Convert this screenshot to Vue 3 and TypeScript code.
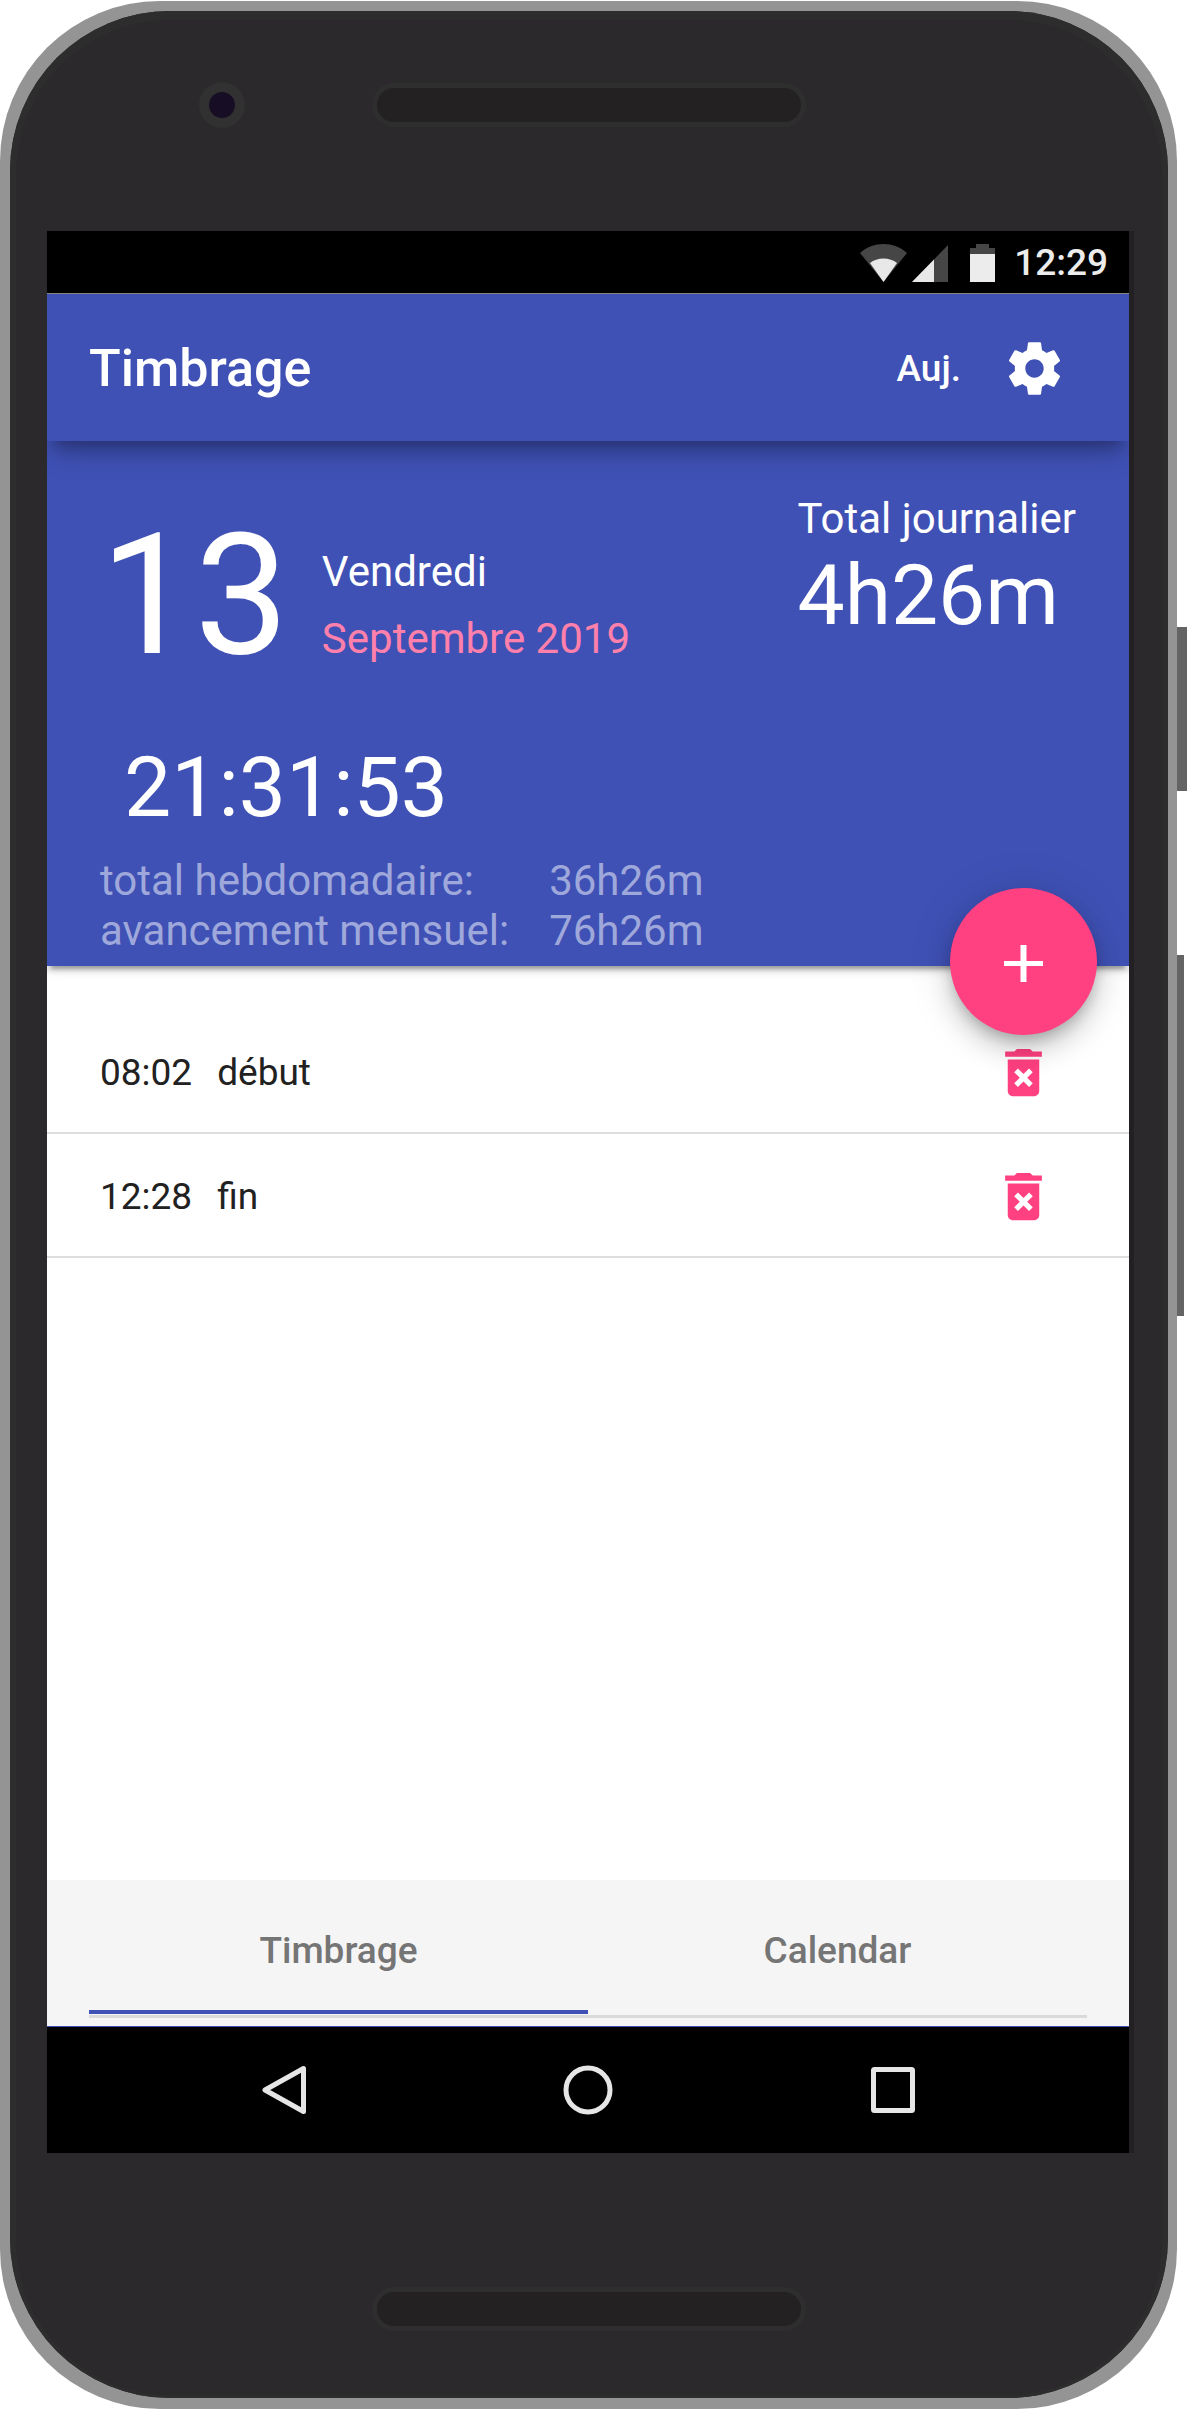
<script setup lang="ts">
import { ref } from 'vue'

interface Stamp {
  time: string
  kind: string
}

const stamps = ref<Stamp[]>([
  { time: '08:02', kind: 'début' },
  { time: '12:28', kind: 'fin' },
])

const totals = [
  { label: 'total hebdomadaire:', value: '36h26m' },
  { label: 'avancement mensuel:', value: '76h26m' },
]

const tabs = ['Timbrage', 'Calendar']
const activeTab = ref('Timbrage')

function removeStamp(index: number) {
  stamps.value.splice(index, 1)
}
</script>

<template>
  <div class="device">
    <div class="phone">
      <div class="body">
        <div class="bezel-top">
          <span class="camera"></span>
          <span class="speaker"></span>
        </div>

        <div class="screen">
          <div class="status-bar">
            <svg class="wifi" width="47" height="38" viewBox="0 0 47 38" aria-hidden="true">
              <path d="M0 9C13-3 34-3 47 9L23.500 38Z" fill="#464646" />
              <path d="M10 19C17 13 30 13 37 19L23.500 38Z" fill="#e8e8e8" />
            </svg>
            <svg class="signal" width="36" height="38" viewBox="0 0 36 38" aria-hidden="true">
              <path d="M0 38L36 1V38Z" fill="#464646" />
              <path d="M0 38L22 15.400V38Z" fill="#e8e8e8" />
            </svg>
            <svg class="battery" width="25" height="38" viewBox="0 0 25 38" aria-hidden="true">
              <path d="M6 0H19V4H25V38H0V4H6Z" fill="#464646" />
              <path d="M0 10H25V38H0Z" fill="#ececec" />
            </svg>
            <span class="status-time">12:29</span>
          </div>

          <div class="app">
            <header class="toolbar">
              <h1>Timbrage</h1>
              <button class="today" type="button">Auj.</button>
              <button class="icon-button" type="button" aria-label="Paramètres">
                <svg width="63" height="63" viewBox="0 0 24 24" aria-hidden="true">
                  <path
                    fill="currentColor"
                    d="M19.430 12.980c.04-.32.07-.64.07-.98s-.03-.66-.07-.98l2.110-1.650c.19-.15.24-.42.12-.64l-2-3.460c-.12-.22-.39-.3-.61-.22l-2.490 1c-.52-.4-1.080-.73-1.690-.98l-.38-2.650C14.460 2.180 14.250 2 14 2h-4c-.25 0-.46.18-.49.42l-.38 2.650c-.61.25-1.170.59-1.690.98l-2.490-1c-.23-.09-.49 0-.61.22l-2 3.460c-.13.22-.07.49.12.64l2.110 1.650c-.04.32-.07.65-.07.98s.03.66.07.98l-2.110 1.650c-.19.15-.24.42-.12.64l2 3.460c.12.22.39.3.61.22l2.490-1c.52.4 1.080.73 1.690.98l.38 2.650c.03.24.24.42.49.42h4c.25 0 .46-.18.49-.42l.38-2.650c.61-.25 1.170-.59 1.690-.98l2.490 1c.23.09.49 0 .61-.22l2-3.460c.12-.22.07-.49-.12-.64l-2.110-1.650zM12 15.500c-1.930 0-3.500-1.570-3.500-3.500s1.570-3.500 3.500-3.500 3.500 1.570 3.500 3.500-1.570 3.500-3.500 3.500z"
                  />
                </svg>
              </button>
            </header>

            <section class="hero">
              <div class="summary">
                <div class="date">
                  <span class="day">13</span>
                  <div class="date-lines">
                    <div>Vendredi</div>
                    <div class="month">Septembre 2019</div>
                  </div>
                </div>
                <div class="clock">21:31:53</div>
                <dl class="totals">
                  <template v-for="total in totals" :key="total.label">
                    <dt>{{ total.label }}</dt>
                    <dd>{{ total.value }}</dd>
                  </template>
                </dl>
              </div>
              <div class="daily">
                <div class="daily-label">Total journalier</div>
                <div class="daily-value">4h26m</div>
              </div>
              <button class="fab" type="button" aria-label="Ajouter">
                <svg width="63" height="63" viewBox="0 0 63 63" aria-hidden="true">
                  <path d="M28.500 15h6v16h16.500v5h-16.500V52h-6V36h-16.500v-5h16.500z" fill="#fff" />
                </svg>
              </button>
            </section>

            <ul class="stamps">
              <li v-for="(stamp, index) in stamps" :key="stamp.time">
                <span>{{ stamp.time }}</span>
                <span class="kind">{{ stamp.kind }}</span>
                <button
                  class="icon-button delete"
                  type="button"
                  :aria-label="'Supprimer ' + stamp.time"
                  @click="removeStamp(index)"
                >
                  <svg width="63" height="63" viewBox="0 0 24 24" aria-hidden="true">
                    <path
                      fill="currentColor"
                      d="M6 19c0 1.100.9 2 2 2h8c1.100 0 2-.9 2-2V7H6v12zm2.460-7.120l1.410-1.410L12 12.590l2.120-2.120 1.410 1.410L13.410 14l2.120 2.120-1.410 1.410L12 15.410l-2.120 2.120-1.410-1.410L10.590 14l-2.130-2.120zM15.500 4l-1-1h-5l-1 1H5v2h14V4z"
                    />
                  </svg>
                </button>
              </li>
            </ul>

            <nav class="tabs">
              <div class="tab-row">
                <button
                  v-for="tab in tabs"
                  :key="tab"
                  type="button"
                  :class="{ active: tab === activeTab }"
                  @click="activeTab = tab"
                >
                  {{ tab }}
                </button>
              </div>
            </nav>
          </div>

          <div class="nav-bar">
            <button type="button" aria-label="Retour">
              <svg width="50" height="50" viewBox="0 0 50 50" aria-hidden="true">
                <path d="M44.500 3.500V46.500L6 25Z" />
              </svg>
            </button>
            <button type="button" aria-label="Accueil">
              <svg width="50" height="50" viewBox="0 0 50 50" aria-hidden="true">
                <circle cx="25" cy="25" r="22" />
              </svg>
            </button>
            <button type="button" aria-label="Applications récentes">
              <svg width="50" height="50" viewBox="0 0 50 50" aria-hidden="true">
                <rect x="6.500" y="4.500" width="39" height="41" rx="1" />
              </svg>
            </button>
          </div>
        </div>

        <div class="bezel-bottom">
          <span class="speaker"></span>
        </div>
      </div>
    </div>

    <div class="side-keys">
      <span class="power"></span>
      <span class="volume"></span>
    </div>
  </div>
</template>

<style>
body {
  margin: 0;
  background: #fff;
}
</style>

<style scoped>
.device {
  display: flex;
  padding: 1px 0;
  font-family: Roboto, "Liberation Sans", sans-serif;
}

button {
  padding: 0;
  border: 0;
  background: none;
  color: inherit;
  font: inherit;
  cursor: pointer;
}

svg {
  display: block;
}

.phone {
  flex: 1;
  min-width: 0;
  padding: 10px 9px 11px 10px;
  border-radius: 160px;
  background: #949494;
}

.body {
  border-radius: 160px;
  background: #2c292c;
  box-shadow: inset 0 3px 0 6px #2c2d2c;
}

.bezel-top {
  display: grid;
  grid-template-columns: 1fr auto 1fr;
  align-items: center;
  height: 46px;
  padding: 71px 0 103px;
}

.camera {
  box-sizing: border-box;
  width: 46px;
  height: 46px;
  margin-left: 189px;
  border: 10px solid #303130;
  border-radius: 50%;
  background: #170e26;
}

.speaker {
  box-sizing: border-box;
  width: 434px;
  height: 44px;
  border: 5px solid #2d2e2d;
  border-radius: 22px;
  background: #232122;
}

.bezel-bottom {
  display: flex;
  justify-content: center;
  padding: 134px 0 67px;
}

.side-keys {
  width: 10px;
  padding-top: 626px;
}

.side-keys span {
  display: block;
  background: #656464;
}

.power {
  height: 164px;
}

.volume {
  width: 7px;
  height: 361px;
  margin-top: 164px;
}

.screen {
  margin: 0 39px 0 37px;
  overflow: hidden;
  background: #000;
  box-shadow: 5px 0 0 #222022;
}

.status-bar {
  display: flex;
  align-items: center;
  justify-content: flex-end;
  height: 61px;
  padding: 1px 21px 0 0;
  border-bottom: 1px solid #85877f;
  color: #ececec;
  font-size: 37px;
  font-weight: 500;
}

.signal {
  margin-left: 5px;
}

.battery {
  margin-left: 22px;
}

.status-time {
  margin-left: 19px;
}

.app {
  display: flex;
  flex-direction: column;
  background: #fff;
  color: #212121;
}

.toolbar {
  position: relative;
  z-index: 3;
  display: flex;
  align-items: center;
  height: 146px;
  padding: 1px 63px 0 42px;
  background: #3f51b5;
  color: #fff;
  box-shadow:
    0 13px 13px -8px rgba(0, 0, 0, 0.2),
    0 16px 26px -5px rgba(0, 0, 0, 0.24);
}

h1 {
  margin: 0 auto 0 0;
  font-size: 52px;
  font-weight: 500;
}

.today {
  margin-right: 42px;
  font-size: 37px;
  font-weight: 500;
}

.hero {
  position: relative;
  z-index: 2;
  display: flex;
  justify-content: space-between;
  padding: 53px 53px 10px;
  background: #3f51b5;
  color: #fff;
  font-size: 42px;
  box-shadow:
    0 5px 5px rgba(0, 0, 0, 0.14),
    0 8px 3px -5px rgba(0, 0, 0, 0.2),
    0 3px 13px rgba(0, 0, 0, 0.12);
}

.summary {
  padding-top: 18px;
}

.date {
  display: flex;
  align-items: last baseline;
  gap: 33px;
}

.day {
  font-size: 168px;
  line-height: 168px;
}

.date-lines {
  line-height: 67px;
}

.month {
  color: #ff80ab;
}

.clock {
  margin-top: 59px;
  padding-left: 24px;
  font-size: 84px;
  line-height: 98px;
}

.totals {
  display: grid;
  grid-template-columns: auto auto;
  justify-content: start;
  column-gap: 40px;
  margin: 19px 0 0;
  color: #9fa8da;
  line-height: 50px;
}

.totals dd {
  margin: 0;
}

.daily-label {
  line-height: 50px;
}

.daily-value {
  margin-top: 3px;
  font-size: 84px;
  line-height: 98px;
}

.fab {
  position: absolute;
  right: 32px;
  bottom: -69px;
  display: flex;
  align-items: center;
  justify-content: center;
  width: 147px;
  height: 147px;
  border-radius: 50%;
  background: #ff4081;
  box-shadow:
    0 8px 13px -3px rgba(0, 0, 0, 0.2),
    0 16px 26px rgba(0, 0, 0, 0.14),
    0 3px 47px rgba(0, 0, 0, 0.12);
}

.stamps {
  min-height: 870px;
  margin: 0;
  padding: 44px 0 0;
  list-style: none;
  font-size: 37px;
}

.stamps li {
  display: flex;
  align-items: center;
  gap: 25px;
  height: 120px;
  padding: 2px 74px 0 53px;
  border-bottom: 2px solid #dedede;
}

.kind {
  flex: 1;
}

.delete {
  color: #ff4081;
}

.tabs {
  padding: 0 42px 8px;
  border-bottom: 1px solid #3f51b5;
  background: #f5f5f5;
}

.tab-row {
  display: flex;
  padding-bottom: 1px;
  border-bottom: 3px solid #dadada;
}

.tab-row button {
  flex: 1;
  height: 134px;
  padding-top: 10px;
  border-bottom: 4px solid transparent;
  color: #757575;
  font-size: 37px;
  font-weight: 500;
}

.tab-row .active {
  border-bottom-color: #3f51b5;
}

.nav-bar {
  display: flex;
  height: 126px;
  padding: 0 85px;
}

.nav-bar button {
  display: flex;
  flex: 1;
  align-items: center;
  justify-content: center;
}

.nav-bar svg {
  fill: none;
  stroke: #e6e6e6;
  stroke-width: 5;
  stroke-linejoin: round;
}
</style>
